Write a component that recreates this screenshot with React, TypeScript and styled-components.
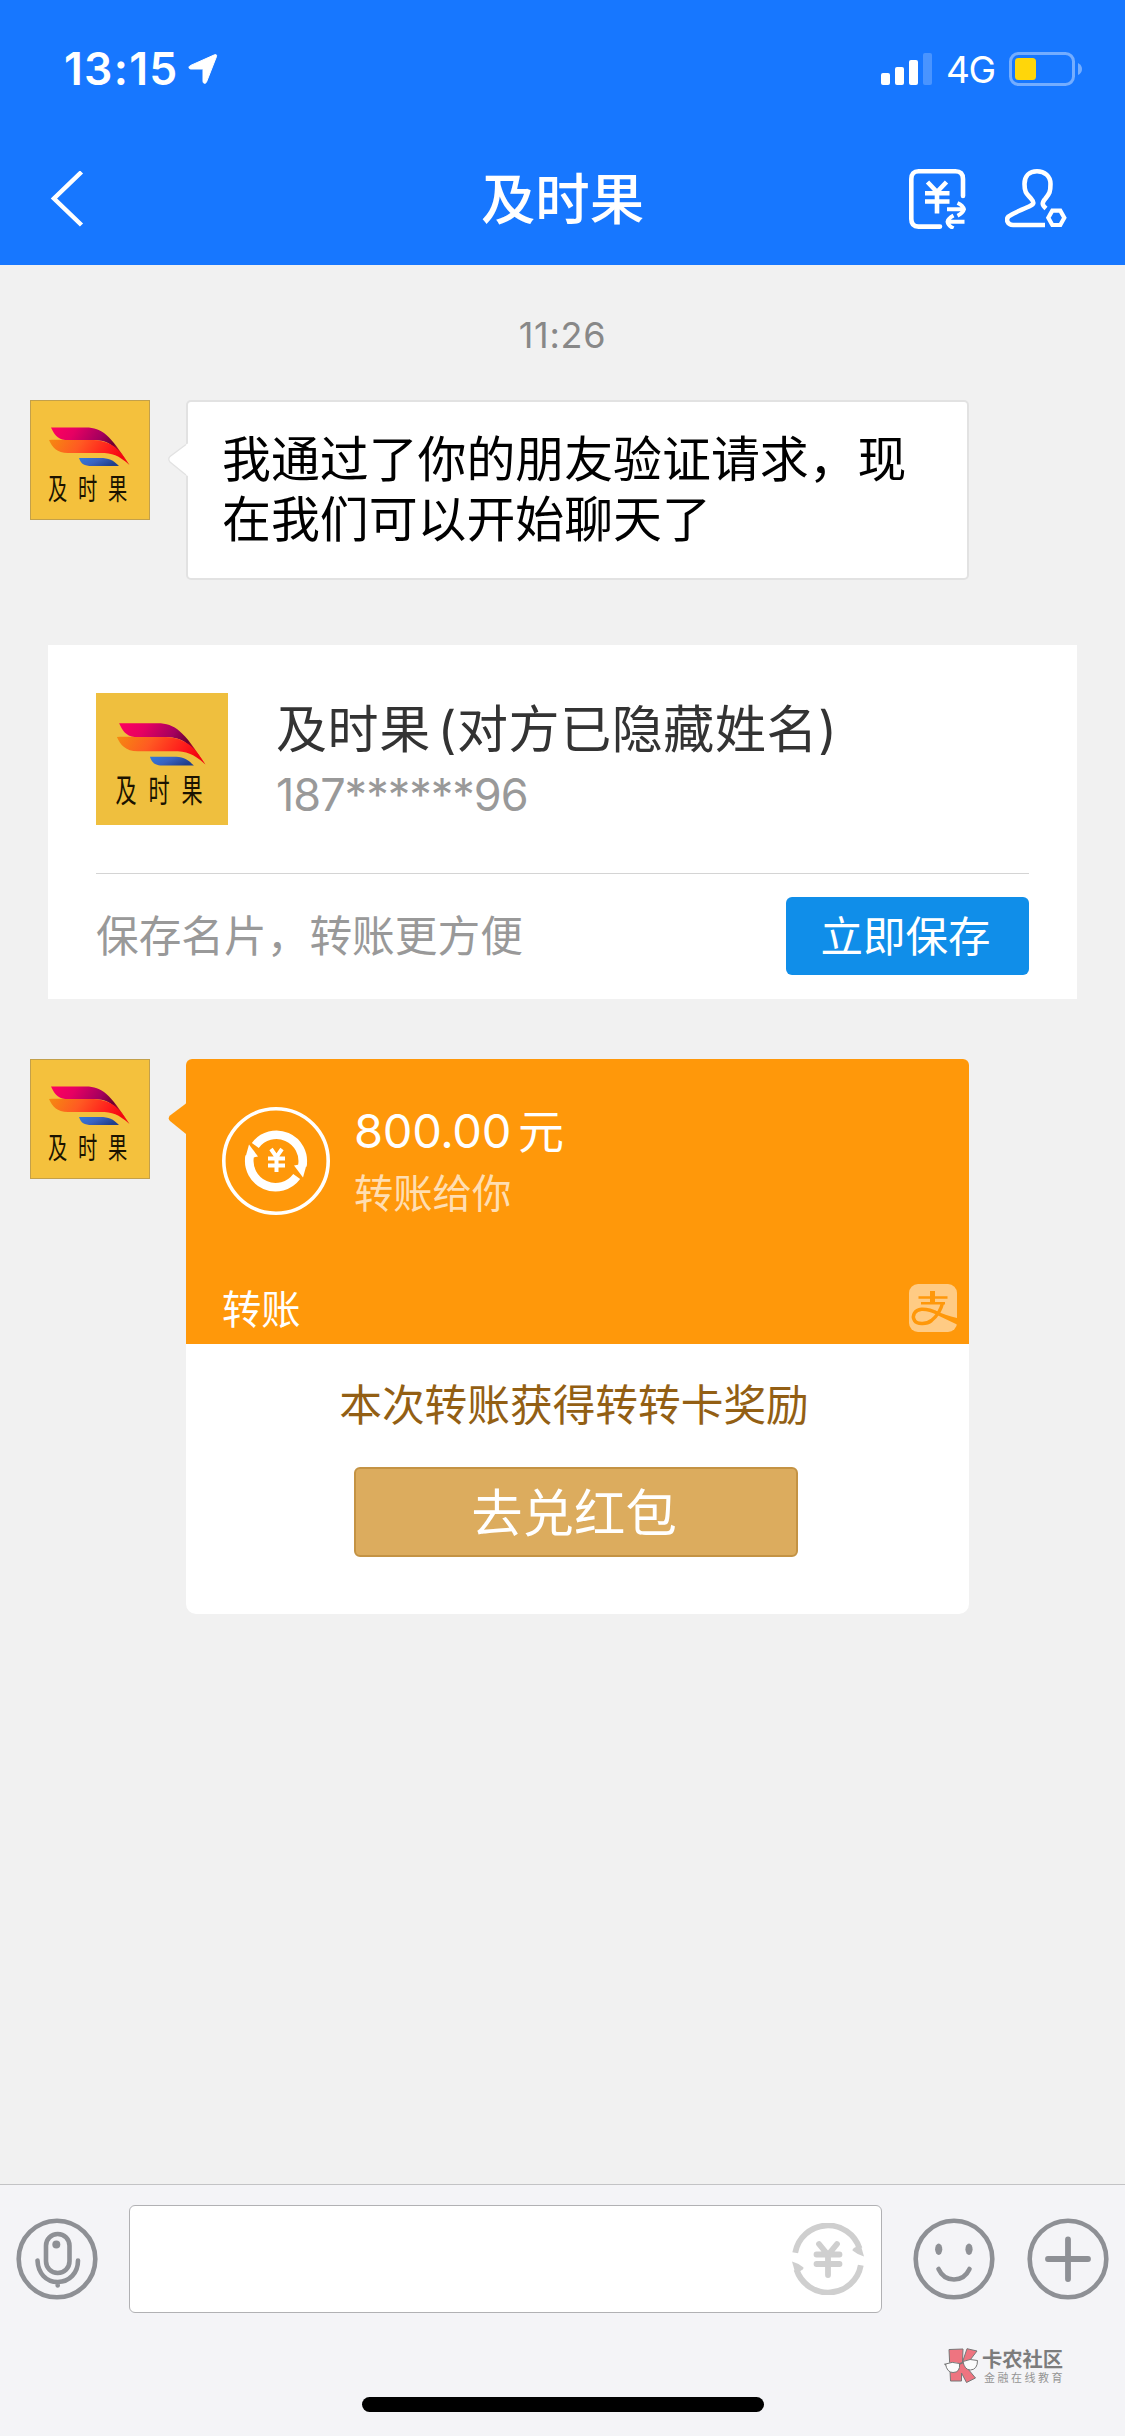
import React, { useId } from "react";
import styled, { createGlobalStyle, css } from "styled-components";

const GlobalStyle = createGlobalStyle`
  * { box-sizing: border-box; }
  body {
    margin: 0;
    background: #f1f1f1;
    font-family: Inter, "Noto Sans CJK SC", sans-serif;
  }
  svg { display: block; flex: none; }
`;

const Screen = styled.div`
  width: 1125px;
  height: 2436px;
  display: flex;
  flex-direction: column;
  background: #f1f1f1;
  overflow: hidden;
`;

/* ---------- header ---------- */

const Header = styled.header`
  height: 265px;
  flex: none;
  background: #1777ff;
  color: #fff;
`;

const StatusBar = styled.div`
  height: 132px;
  padding: 6px 43px 0 64px;
  display: flex;
  align-items: center;
  justify-content: space-between;
`;

const StatusGroup = styled.div<{ $gap: number }>`
  display: flex;
  align-items: center;
  gap: ${(p) => p.$gap}px;
`;

const Clock = styled.span`
  font-size: 44.5px;
  line-height: 50px;
  font-weight: 600;
  width: 113px;
  letter-spacing: 1.3px;
  white-space: nowrap;
`;

const Network = styled.span`
  font-size: 37px;
  line-height: 44px;
  width: 49px;
  letter-spacing: -1.5px;
  padding-top: 2px;
`;

const NavBar = styled.div`
  height: 133px;
  padding: 0 58px 0 50px;
  display: grid;
  grid-template-columns: 160px 1fr 160px;
  align-items: center;
`;

const Title = styled.h1`
  margin: 1px 0 0 8px;
  font-size: 54.4px;
  line-height: 66px;
  font-weight: 500;
  text-align: center;
`;

const NavActions = styled.div`
  display: flex;
  justify-content: flex-end;
  gap: 38px;
`;

/* ---------- conversation ---------- */

const Conversation = styled.main`
  flex: 1;
  display: flex;
  flex-direction: column;
`;

const TimeStamp = styled.time`
  margin-top: 48px;
  font-size: 36px;
  line-height: 44px;
  color: #888;
  text-align: center;
  letter-spacing: 0.7px;
`;

const MessageRow = styled.div<{ $top: number }>`
  margin-top: ${(p) => p.$top}px;
  padding-left: 30px;
  display: flex;
  align-items: flex-start;
  gap: 36px;
`;

const AvatarBox = styled.div<{ $size: number; $bordered?: boolean }>`
  width: ${(p) => p.$size}px;
  height: ${(p) => p.$size}px;
  flex: none;
  position: relative;
  background: ${(p) => (p.$bordered ? "#f4c13d" : "#efbf3e")};
  box-shadow: ${(p) => (p.$bordered ? "inset 0 0 0 1px #c3a04a" : "none")};
`;

const AvatarName = styled.div<{ $size: number }>`
  position: absolute;
  left: 0;
  top: 60.5%;
  width: 96%;
  display: flex;
  justify-content: center;
  gap: ${(p) => p.$size * 0.007}px;
  font-size: ${(p) => p.$size * 0.243}px;
  line-height: ${(p) => p.$size * 0.28}px;
  font-weight: 400;
  color: #1b1300;

  span {
    transform: scaleX(0.66);
  }
`;

const bubbleBase = css`
  width: 783px;
  position: relative;
`;

const TextBubble = styled.div`
  ${bubbleBase}
  height: 180px;
  padding: 28px 34px 28px;
  border: 2px solid #e2e2e2;
  border-radius: 5px;
  background: #fff;
  font-size: 48.9px;
  line-height: 60px;
  color: #000;
`;

const TailSvg = styled.svg<{ $left: number; $top: number }>`
  position: absolute;
  left: ${(p) => p.$left}px;
  top: ${(p) => p.$top}px;
`;

/* ---------- contact card ---------- */

const ContactCard = styled.section`
  margin: 65px 48px 0;
  height: 354px;
  padding: 48px 48px 0;
  background: #fff;
`;

const ContactTop = styled.div`
  height: 180px;
  display: flex;
  gap: 48px;
`;

const ContactInfo = styled.div`
  padding-top: 6px;
`;

const ContactName = styled.div`
  font-size: 51px;
  line-height: 62px;
  color: #333;
  white-space: pre;
  letter-spacing: 0.6px;
  word-spacing: -8px;
`;

const ContactPhone = styled.div`
  margin-top: 7px;
  font-size: 45px;
  line-height: 54px;
  color: #999;
  letter-spacing: -1px;
`;

const ContactFooter = styled.div`
  border-top: 1px solid #d4d4d4;
  padding-top: 23px;
  display: flex;
  justify-content: space-between;
  align-items: center;
`;

const Hint = styled.span`
  padding-top: 2px;
  font-size: 42.7px;
  line-height: 52px;
  color: #999;
`;

const SaveButton = styled.button`
  width: 243px;
  height: 78px;
  padding: 1px 4px 0 0;
  border: 0;
  border-radius: 6px;
  background: #108ee9;
  color: #fff;
  font-family: inherit;
  font-size: 42.5px;
  line-height: 78px;
`;

/* ---------- transfer card ---------- */

const TransferCard = styled.div`
  ${bubbleBase}
  height: 555px;
  border-radius: 6px 6px 10px 10px;
  background: #fff;
`;

const TransferTop = styled.div`
  height: 285px;
  padding: 42px 12px 12px 36px;
  border-radius: 6px 6px 0 0;
  background: #ff980a;
  color: #fff;
  display: flex;
  flex-direction: column;
  justify-content: space-between;
`;

const TransferMain = styled.div`
  display: flex;
  align-items: flex-start;
  padding-top: 6px;
  gap: 24px;
`;

const Amount = styled.div`
  display: flex;
  align-items: center;
  gap: 7px;
  font-size: 46px;
  line-height: 48px;
`;

const AmountNumber = styled.span`
  font-size: 47px;
  letter-spacing: -0.3px;
`;

const AmountNote = styled.div`
  margin-top: 14px;
  font-size: 39.3px;
  line-height: 50px;
  color: rgba(255, 255, 255, 0.7);
`;

const TransferFoot = styled.div`
  display: flex;
  justify-content: space-between;
  align-items: center;
  font-size: 39.3px;
  line-height: 48px;
`;

const FootLabel = styled.span`
  padding-top: 2px;
  margin-bottom: -2px;
`;

const Reward = styled.div`
  height: 270px;
  display: flex;
  flex-direction: column;
  align-items: center;
`;

const RewardText = styled.div`
  margin: 36px 7px 0 0;
  font-size: 42.7px;
  line-height: 52px;
  color: #935f14;
`;

const RewardButton = styled.button`
  width: 444px;
  height: 90px;
  margin: 35px 3px 0 0;
  padding: 1px 4px 0 0;
  border: 2px solid #c49344;
  border-radius: 6px;
  background: #dcac5e;
  color: #fff;
  font-family: inherit;
  font-size: 51.4px;
  line-height: 86px;
`;

/* ---------- composer ---------- */

const Composer = styled.footer`
  height: 252px;
  flex: none;
  border-top: 1px solid #c3c3c5;
  background: #f4f4f7;
  display: flex;
  flex-direction: column;
`;

const ComposerRow = styled.div`
  padding: 20px 16px 0;
  display: flex;
  align-items: center;
`;

const InputBox = styled.div`
  width: 753px;
  height: 108px;
  margin: 0 31px 0 31px;
  padding-right: 17px;
  border: 1px solid #b1b1b4;
  border-radius: 6px;
  background: #fff;
  display: flex;
  align-items: center;
  justify-content: flex-end;
`;

const Tools = styled.div`
  display: flex;
  gap: 32px;
`;

const Brand = styled.div`
  margin: 35px 62px 0 0;
  display: flex;
  align-self: flex-end;
  gap: 3px;
  height: 36px;
`;

const BrandText = styled.div`
  width: 81px;
  display: flex;
  flex-direction: column;
  white-space: nowrap;
`;

const BrandName = styled.span`
  font-size: 20.3px;
  line-height: 24px;
  font-weight: 700;
  color: #7c7c7c;
`;

const BrandSlogan = styled.span`
  padding-left: 2px;
  font-size: 11px;
  line-height: 12px;
  letter-spacing: 2.5px;
  color: #949494;
`;

const HomeIndicator = styled.div`
  width: 402px;
  height: 15px;
  margin: 13px 0 0 362px;
  border-radius: 8px;
  background: #000;
`;

/* ---------- drawings ---------- */

function Avatar({ size, bordered }: { size: number; bordered?: boolean }) {
  const id = useId().replace(/[^a-zA-Z0-9]/g, "");
  return (
    <AvatarBox $size={size} $bordered={bordered}>
      <svg width={size} height={size} viewBox="0 0 120 120">
        <defs>
          <linearGradient id={`p${id}`} x1="0" x2="1" y1="0" y2="0.3">
            <stop offset="0" stopColor="#ff005e" />
            <stop offset="0.3" stopColor="#e60062" />
            <stop offset="0.65" stopColor="#a3005e" />
            <stop offset="0.85" stopColor="#6b0030" />
            <stop offset="1" stopColor="#e01020" />
          </linearGradient>
          <linearGradient id={`o${id}`} x1="0" x2="1" y1="0" y2="0.2">
            <stop offset="0" stopColor="#f58a10" />
            <stop offset="0.4" stopColor="#ff5a22" />
            <stop offset="0.8" stopColor="#ff1a1c" />
            <stop offset="1" stopColor="#f3050f" />
          </linearGradient>
          <linearGradient id={`b${id}`} x1="0" x2="1" y1="0" y2="0.4">
            <stop offset="0" stopColor="#2f7be0" />
            <stop offset="0.5" stopColor="#3a63c0" />
            <stop offset="1" stopColor="#203f8c" />
          </linearGradient>
        </defs>
        <path d="M21 27.5H56C72 27.5 80 35 99.5 65C84 43 76 40 62 40H35C27 39 24 34 21 27.5Z" fill={`url(#p${id})`} />
        <path d="M19 40C25 39.5 30 40 36 40H60C80 40 88 47 99.5 65C88 55 83 53 70 53H38C27 53 22 47 19 40Z" fill={`url(#o${id})`} />
        <path d="M49 58H70C79 58 83 60 89 66H62C54 66 51 64 49 58Z" fill={`url(#b${id})`} />
      </svg>
      <AvatarName $size={size}>
        <span>及</span>
        <span>时</span>
        <span>果</span>
      </AvatarName>
    </AvatarBox>
  );
}

const LocationArrow = () => (
  <svg width="30" height="32" viewBox="0 0 30 32">
    <path
      d="M26.5 1.800C28.300 1.200 29 2 28.400 3.800L18.500 29C17.700 31 15 30.800 15 28.300V16.500Q15 16 14.500 16H3C.4 16 .4 13.400 2.500 12.500Z"
      fill="#fff"
      stroke="#fff"
      strokeWidth="1"
    />
  </svg>
);

const Signal = () => (
  <svg width="51" height="33" viewBox="0 0 51 33" fill="#fff">
    <rect x="0" y="20" width="9" height="12" rx="2" />
    <rect x="14" y="14" width="9" height="18" rx="2" />
    <rect x="28" y="7" width="9" height="25" rx="2" />
    <rect x="42" y="0" width="9" height="32" rx="2" opacity="0.22" />
  </svg>
);

const Battery = () => (
  <svg width="73" height="34" viewBox="0 0 73 34">
    <rect x="1.500" y="1.500" width="63" height="31" rx="8" fill="none" stroke="#74adff" strokeWidth="3" />
    <rect x="6" y="6" width="21" height="22" rx="3.500" fill="#ffd60a" />
    <path d="M69 11Q73 13 73 17T69 23Z" fill="#74adff" />
  </svg>
);

const BackIcon = () => (
  <svg width="34" height="56" viewBox="0 0 34 56">
    <path d="M31.500 1L4 27.500L31.500 54" fill="none" stroke="#fff" strokeWidth="4.500" />
  </svg>
);

const TransferIcon = () => (
  <svg width="58" height="60" viewBox="0 0 58 60" fill="none" stroke="#fff" strokeWidth="4.600">
    <path d="M54 27V10Q54 2.300 46.500 2.300H9.500Q2.300 2.300 2.300 10V50Q2.300 57.600 9.500 57.600H31" strokeLinecap="round" />
    <path d="M18.500 13L28 23L37.500 13M28 22V44.500M16 24.200H40.500M16 32.500H40.500" />
    <path d="M38 40.300H55M48.500 34Q54 36.500 55 40.300Q54 44 48.500 46.700M55.500 52.700H39M44.500 46.500Q39 49.500 38.500 52.700Q39 56.500 44.500 59.300" strokeWidth="3.900" />
  </svg>
);

const ContactIcon = () => (
  <svg width="62" height="60" viewBox="0 0 62 60" fill="none" stroke="#fff" strokeWidth="4.600">
    <path d="M40 56H8C2.500 56 .500 50.500 3.500 47.500C8 44 18 40.500 25 37C29 35 29.500 33.500 26 29.500C22 25 19.500 24 19.500 15C19.500 7 24.500 2.300 32 2.300S45.500 7 45.500 15C45.500 23 44.500 24.500 40.500 29.500C36.500 34 37 36 41 39.500" />
    <path d="M43.300 48.800L47.300 41.700H55.300L59.300 48.800L55.300 56H47.300Z" strokeWidth="4.200" />
  </svg>
);

const CircledYen = () => (
  <svg width="108" height="108" viewBox="-54 -54 108 108" fill="none" stroke="#fff">
    <circle r="52.200" strokeWidth="3.600" />
    {[0, 180].map((angle) => (
      <g key={angle} transform={`rotate(${angle})`}>
        <path d="M-20.700 -15.500A26.300 26.300 0 0 1 26.300 5" strokeWidth="8.600" />
        <path d="M18 4.500L31 2L27 16.500Z" fill="#fff" stroke="none" />
      </g>
    ))}
    <path d="M-5 -12L.5 -4L6 -12M.5 -4V11M-8 -2.500H9M-8 4.500H9" strokeWidth="4" />
  </svg>
);

const AlipayBadge = () => (
  <svg width="48" height="48" viewBox="0 0 48 48">
    <rect width="48" height="48" rx="9" fill="#ffcb84" />
    <g fill="none" stroke="#ff980a">
      <path d="M23.500 7V19" strokeWidth="5" />
      <path d="M9.500 13.500H38.500M12 19.300H36" strokeWidth="2.600" />
      <path d="M33.500 19C32 26 28 32 22.500 36.500C18 40 8.500 41 5.500 36.500C2.500 31 6 26 12.500 25.300C18 25 24 27 29 29.500" strokeWidth="3.500" />
    </g>
    <path d="M26 26.500C33 29.500 40 32 48 34V40.500L28 31Z" fill="#ff980a" />
  </svg>
);

const InputYen = () => (
  <svg width="72" height="72" viewBox="-36 -36 72 72" fill="none" stroke="#cfcfcf">
    {[0, 180].map((angle) => (
      <g key={angle} transform={`rotate(${angle})`}>
        <path d="M-32.800 -6.200A33.200 33.200 0 0 1 31.500 -10.500" strokeWidth="5.800" />
        <path d="M33 -13L36 -2.500Q30 -4 24.500 -8.500Q24 -10.500 29 -12.500Z" fill="#cfcfcf" stroke="none" />
      </g>
    ))}
    <path d="M-9 -15L0 -4L9 -15M0 -4V16M-11.500 -4.500H11.500M-11.500 5H11.500" strokeWidth="5.800" strokeLinecap="round" />
  </svg>
);

type ToolKind = "mic" | "smile" | "plus";

function ToolIcon({ kind }: { kind: ToolKind }) {
  return (
    <svg width="82" height="82" viewBox="0 0 82 82" fill="none" stroke="#8e9095" strokeWidth="4.600">
      <circle cx="41" cy="41" r="38.300" />
      {kind === "mic" && (
        <>
          <rect x="30" y="16" width="23.500" height="39" rx="11.700" />
          <circle cx="40.300" cy="26.500" r="4" fill="#8e9095" stroke="none" />
          <path d="M21.500 42.500C22 55 30 64 41.700 64S62 55 62 42.500M41.700 64V67.500" strokeLinecap="round" />
        </>
      )}
      {kind === "smile" && (
        <>
          <ellipse cx="25.700" cy="31.300" rx="3.600" ry="5.700" fill="#8e9095" stroke="none" />
          <ellipse cx="56" cy="31.300" rx="3.600" ry="5.700" fill="#8e9095" stroke="none" />
          <path d="M25.500 51C32 65 50 65 56.500 51" strokeLinecap="round" />
        </>
      )}
      {kind === "plus" && <path d="M41 21.500V61M21 41H61" strokeWidth="5.800" strokeLinecap="round" />}
    </svg>
  );
}

const BrandLogo = () => (
  <svg width="35" height="36" viewBox="0 0 35 36" stroke="#777" strokeLinejoin="round">
    <g fill="#ee7480" strokeWidth="1">
      <path d="M5 1.500L19 1L18.500 14L23 .7L33 3L21.500 18L31.500 30L22.500 34.500L17.500 25V33H6.500Z" />
    </g>
    <g fill="#fbfbfc" strokeWidth="1">
      <path d="M1.500 16Q8 13 15.500 15.500Q16.500 24.500 9 24.500Q3 24.500 1.500 16Z" />
      <path d="M19 13.500Q26 10 33.500 12.500Q33.500 21.500 26.500 22Q20.500 22 19 13.500Z" />
      <path d="M.5 15.700L2 17M15.500 16L19 14.500" strokeWidth="1.500" />
    </g>
  </svg>
);

const Tail = ({ fill, outlined }: { fill: string; outlined?: boolean }) => (
  <TailSvg
    $left={outlined ? -20 : -18}
    $top={outlined ? 41 : 43}
    width="21"
    height="34"
    viewBox="0 0 21 34"
  >
    <path d="M21 0L18 1.500L2 13.500Q-.5 16 2 19L18 32L21 33.500Z" fill={fill} />
    {outlined && <path d="M18 1.500L2 13.500Q-.5 16 2 19L18 32" fill="none" stroke="#e2e2e2" strokeWidth="1.300" />}
  </TailSvg>
);

export default function App() {
  return (
    <>
      <GlobalStyle />
      <Screen>
        <Header>
          <StatusBar>
            <StatusGroup $gap={11}>
              <Clock>13:15</Clock>
              <LocationArrow />
            </StatusGroup>
            <StatusGroup $gap={14}>
              <Signal />
              <Network>4G</Network>
              <Battery />
            </StatusGroup>
          </StatusBar>
          <NavBar>
            <BackIcon />
            <Title>及时果</Title>
            <NavActions>
              <TransferIcon />
              <ContactIcon />
            </NavActions>
          </NavBar>
        </Header>

        <Conversation>
          <TimeStamp>11:26</TimeStamp>

          <MessageRow $top={43}>
            <Avatar size={120} bordered />
            <TextBubble>
              <Tail fill="#fff" outlined />
              我通过了你的朋友验证请求，现在我们可以开始聊天了
            </TextBubble>
          </MessageRow>

          <ContactCard>
            <ContactTop>
              <Avatar size={132} />
              <ContactInfo>
                <ContactName>及时果 (对方已隐藏姓名)</ContactName>
                <ContactPhone>187******96</ContactPhone>
              </ContactInfo>
            </ContactTop>
            <ContactFooter>
              <Hint>保存名片，转账更方便</Hint>
              <SaveButton>立即保存</SaveButton>
            </ContactFooter>
          </ContactCard>

          <MessageRow $top={60}>
            <Avatar size={120} bordered />
            <TransferCard>
              <Tail fill="#ff980a" />
              <TransferTop>
                <TransferMain>
                  <CircledYen />
                  <div>
                    <Amount>
                      <AmountNumber>800.00</AmountNumber>元
                    </Amount>
                    <AmountNote>转账给你</AmountNote>
                  </div>
                </TransferMain>
                <TransferFoot>
                  <FootLabel>转账</FootLabel>
                  <AlipayBadge />
                </TransferFoot>
              </TransferTop>
              <Reward>
                <RewardText>本次转账获得转转卡奖励</RewardText>
                <RewardButton>去兑红包</RewardButton>
              </Reward>
            </TransferCard>
          </MessageRow>
        </Conversation>

        <Composer>
          <ComposerRow>
            <ToolIcon kind="mic" />
            <InputBox>
              <InputYen />
            </InputBox>
            <Tools>
              <ToolIcon kind="smile" />
              <ToolIcon kind="plus" />
            </Tools>
          </ComposerRow>
          <Brand>
            <BrandLogo />
            <BrandText>
              <BrandName>卡农社区</BrandName>
              <BrandSlogan>金融在线教育</BrandSlogan>
            </BrandText>
          </Brand>
          <HomeIndicator />
        </Composer>
      </Screen>
    </>
  );
}
